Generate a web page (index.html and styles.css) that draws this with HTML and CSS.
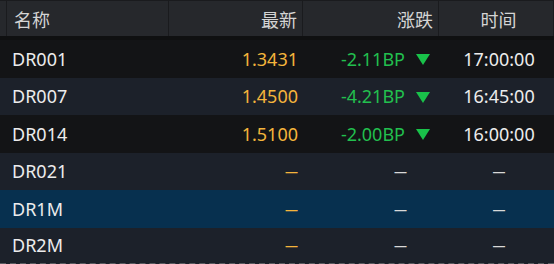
FILE: index.html
```html
<!DOCTYPE html>
<html lang="zh">
<head>
<meta charset="utf-8">
<link rel="stylesheet" href="styles.css">
</head>
<body>
<div class="board">
  <div class="head">
    <div class="hcell hpad"></div>
    <div class="hcell hname">名称</div>
    <div class="hcell hright">最新</div>
    <div class="hcell hright">涨跌</div>
    <div class="hcell hcenter">时间</div>
  </div>
  <div class="rows">
    <div class="row dark">
      <div class="name">DR001</div>
      <div class="price">1.3431</div>
      <div class="chg"><span class="down">-2.11BP</span><span class="tri"></span></div>
      <div class="time">17:00:00</div>
    </div>
    <div class="row alt">
      <div class="name">DR007</div>
      <div class="price">1.4500</div>
      <div class="chg"><span class="down">-4.21BP</span><span class="tri"></span></div>
      <div class="time">16:45:00</div>
    </div>
    <div class="row dark">
      <div class="name">DR014</div>
      <div class="price">1.5100</div>
      <div class="chg"><span class="down">-2.00BP</span><span class="tri"></span></div>
      <div class="time">16:00:00</div>
    </div>
    <div class="row alt">
      <div class="name">DR021</div>
      <div class="price"><span class="dash gold">—</span></div>
      <div class="empty"><span class="dash">—</span></div>
      <div class="time"><span class="dash">—</span></div>
    </div>
    <div class="row sel">
      <div class="name">DR1M</div>
      <div class="price"><span class="dash gold">—</span></div>
      <div class="empty"><span class="dash">—</span></div>
      <div class="time"><span class="dash">—</span></div>
    </div>
    <div class="row alt last">
      <div class="name">DR2M</div>
      <div class="price"><span class="dash gold">—</span></div>
      <div class="empty"><span class="dash">—</span></div>
      <div class="time"><span class="dash">—</span></div>
    </div>
  </div>
</div>
</body>
</html>
```

FILE: styles.css
```css
html, body {
  margin: 0;
  padding: 0;
  background: #121314;
}
.board {
  width: 554px;
  height: 264px;
  overflow: hidden;
  font-family: "Noto Sans", "Noto Sans CJK SC", sans-serif;
  font-size: 18px;
  color: #ececec;
}
.head {
  display: grid;
  grid-template-columns: 6px 161px 133px 135px 114px;
  column-gap: 1px;
  padding: 1px 1px 0 0;
  height: 35px;
  background: #1a1b1e;
  border-bottom: 4px solid #0f1011;
}
.hcell {
  background: #26282c;
  color: #d4d4d4;
  display: flex;
  align-items: center;
  font-family: "Noto Sans CJK SC", sans-serif;
  font-size: 18px;
}
.hname { padding-left: 7px; }
.hright { justify-content: flex-end; padding-right: 5px; }
.hcenter { justify-content: center; padding-left: 5px; }

.rows {
  display: flex;
  flex-direction: column;
}
.row {
  display: grid;
  grid-template-columns: 168px 134px 136px 116px;
  height: 37.5px;
  align-items: center;
}
.row.dark { background: #131416; }
.row.alt { background: #1c212a; }
.row.sel { background: #07304f; }
.row.last {
  height: 35px;
  border-bottom: 2px dashed #5a5d62;
}
.name { padding-left: 12px; }
.price {
  text-align: right;
  padding-right: 4px;
  color: #f4b43c;
}
.chg {
  display: flex;
  justify-content: flex-end;
  align-items: center;
  padding-right: 8px;
}
.empty {
  text-align: right;
  padding-right: 31px;
}
.down { color: #22bf4e; }
.tri {
  width: 0;
  height: 0;
  margin: 2px 0 0 11px;
  border-left: 7px solid transparent;
  border-right: 7px solid transparent;
  border-top: 11px solid #19c24a;
}
.time {
  text-align: center;
  padding-left: 6px;
}
.dash {
  font-size: 13px;
  font-weight: 700;
  color: #d8d8d8;
  position: relative;
  top: -2px;
}
.dash.gold { color: #f4b43c; }
```
